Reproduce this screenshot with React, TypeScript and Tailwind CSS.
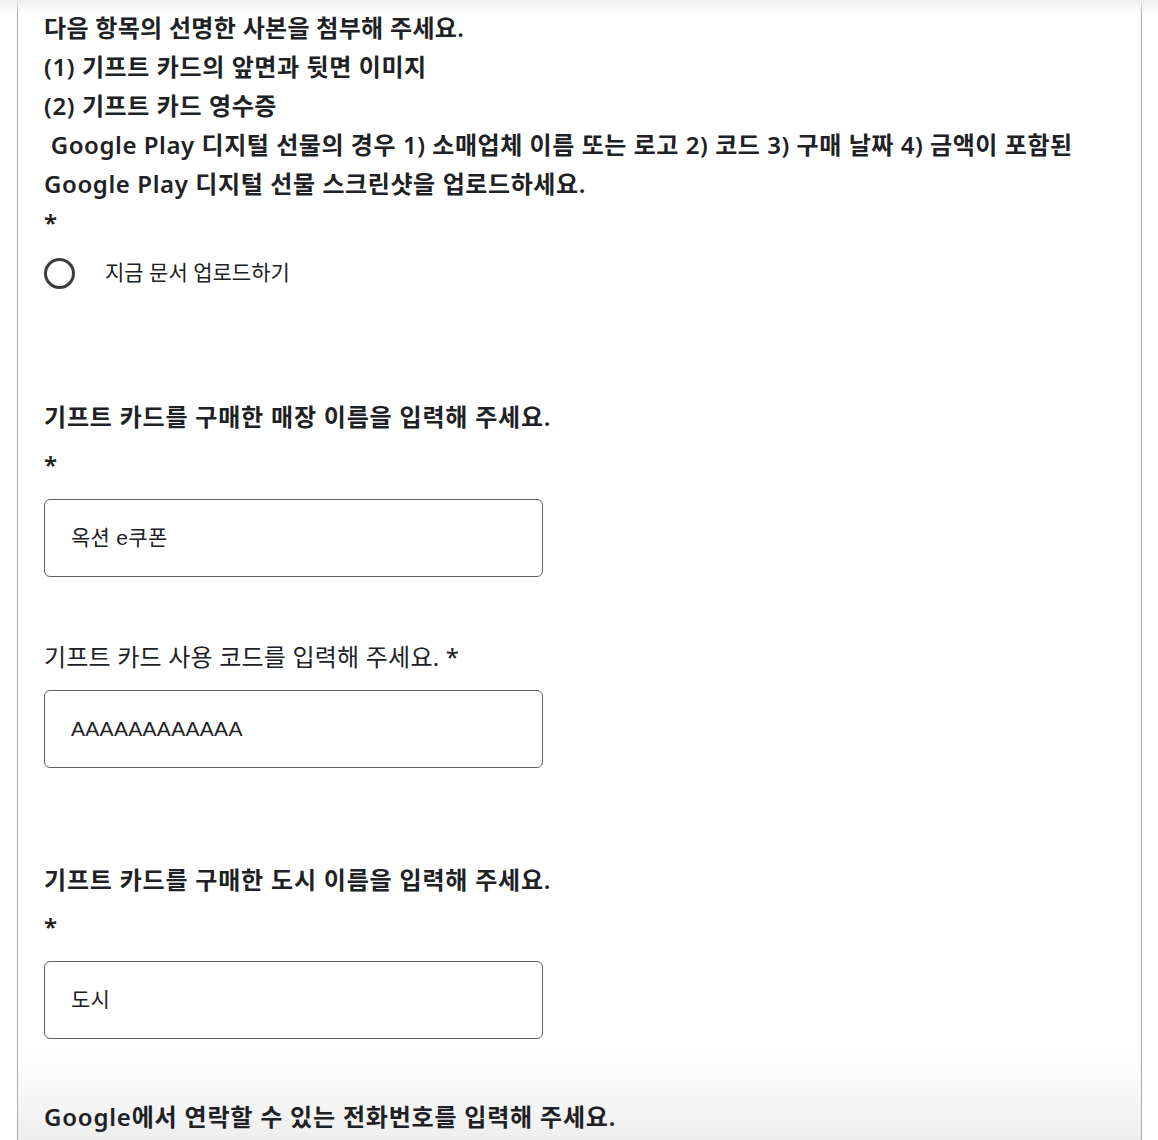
import React from "react";

const font = '"Noto Sans", "Noto Sans CJK KR", sans-serif';

function Input({ value }: { value: string }) {
  return (
    <div
      className="w-[499px] h-[78px] border border-[#5f6368] rounded-[6px] flex items-center pl-[26px] text-[21px] tracking-[0.3px] text-[#202124]"
      style={{ fontFamily: '"Liberation Sans", "Noto Sans CJK KR", sans-serif' }}
    >
      {value}
    </div>
  );
}

export default function App() {
  return (
    <div className="relative w-[1158px] h-[1140px] overflow-hidden bg-white" style={{ fontFamily: font }}>
      <div className="pointer-events-none absolute left-[18px] bottom-0 w-[1123px] h-[90px] bg-gradient-to-b from-white to-[#eeeeee]" />
      <div className="relative ml-[17px] w-[1125px] h-full border-x border-[#a8a8a8] pl-[26px] pt-[8px] text-[#202124]">
        <div className="text-[24px] leading-[39px] font-semibold whitespace-nowrap tracking-[0.6px]">
          <div className="tracking-[0.3px]">다음 항목의 선명한 사본을 첨부해 주세요.</div>
          <div>(1) 기프트 카드의 앞면과 뒷면 이미지</div>
          <div>(2) 기프트 카드 영수증</div>
          <div className="tracking-[0.55px]">&nbsp;Google Play 디지털 선물의 경우 1) 소매업체 이름 또는 로고 2) 코드 3) 구매 날짜 4) 금액이 포함된</div>
          <div>Google Play 디지털 선물 스크린샷을 업로드하세요.</div>
          <div>*</div>
        </div>
        <div className="mt-[16px] h-[30px] flex items-center">
          <div className="w-[31px] h-[31px] rounded-full border-[3px] border-[#3c3c3c]" />
          <span className="ml-[30px] text-[21px] text-[#202124]">지금 문서 업로드하기</span>
        </div>

        <div className="mt-[109px] text-[24px] leading-[39px] font-semibold tracking-[0.8px]">
          <div>기프트 카드를 구매한 매장 이름을 입력해 주세요.</div>
          <div className="mt-[9px]">*</div>
        </div>
        <div className="mt-[15px]">
          <Input value="옥션 e쿠폰" />
        </div>

        <div className="mt-[60px] text-[24px] leading-[39px] tracking-[0.2px]">
          기프트 카드 사용 코드를 입력해 주세요. *
        </div>
        <div className="mt-[14px]">
          <Input value="AAAAAAAAAAAA" />
        </div>

        <div className="mt-[92px] text-[24px] leading-[39px] font-semibold tracking-[0.8px]">
          <div>기프트 카드를 구매한 도시 이름을 입력해 주세요.</div>
          <div className="mt-[8px]">*</div>
        </div>
        <div className="mt-[15px]">
          <Input value="도시" />
        </div>

        <div className="mt-[58px] text-[24px] leading-[39px] font-semibold tracking-[0.8px]">
          Google에서 연락할 수 있는 전화번호를 입력해 주세요.
        </div>
      </div>

      <div className="pointer-events-none absolute left-0 top-0 w-full h-[14px] bg-gradient-to-b from-[#eeeeee] to-transparent" />
    </div>
  );
}
